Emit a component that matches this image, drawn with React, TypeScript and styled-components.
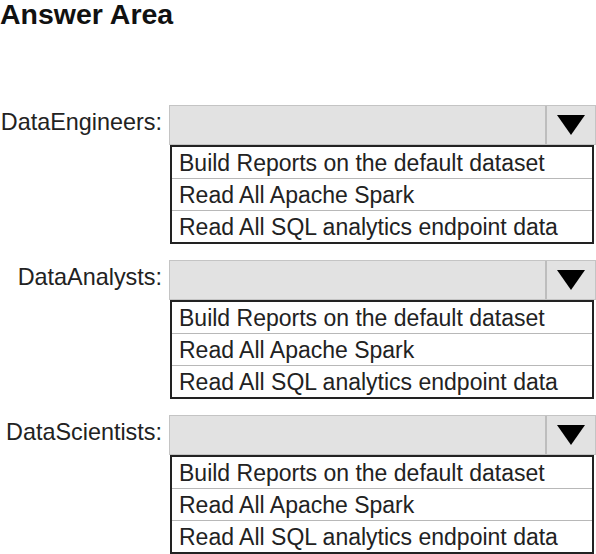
import React from "react";
import styled, { createGlobalStyle } from "styled-components";

const Global = createGlobalStyle`
  html, body { margin: 0; padding: 0; background: #ffffff; }
  body { font-family: "Liberation Sans", Arial, sans-serif; color: #1e1e1e; }
`;

const Page = styled.div`
  width: 596px;
  height: 554px;
  overflow: hidden;
  display: flex;
  flex-direction: column;
`;

const Title = styled.h1`
  margin: 0 0 77px 0;
  font-size: 28.5px;
  font-weight: bold;
  line-height: 28px;
  color: #111;
`;

const Sections = styled.div`
  display: flex;
  flex-direction: column;
  gap: 16px;
`;

const Section = styled.div`
  display: grid;
  grid-template-columns: 162px 1fr;
  column-gap: 7px;
`;

const Label = styled.div`
  grid-column: 1;
  grid-row: 1;
  text-align: right;
  font-size: 23.4px;
  line-height: 34px;
  color: #222;
  white-space: nowrap;
`;

const Select = styled.div`
  grid-column: 2;
  grid-row: 1;
  height: 40px;
  box-sizing: border-box;
  border: 1px solid #c4c4c4;
  background: #e2e2e2;
  display: flex;
  justify-content: flex-end;
`;

const Toggle = styled.div`
  width: 48px;
  border-left: 2px solid #bdbdbd;
  display: flex;
  align-items: center;
  justify-content: center;
`;

const List = styled.div`
  grid-column: 2;
  grid-row: 2;
  margin: 0 2px 0 1px;
  border: 2px solid #222;
  background: #fff;
  display: flex;
  flex-direction: column;
`;

const Option = styled.div<{ $last?: boolean }>`
  height: 31px;
  box-sizing: border-box;
  padding: 2px 0 0 7px;
  line-height: 29px;
  font-size: 23px;
  color: #222;
  white-space: nowrap;
  overflow: hidden;
  border-bottom: ${(p) => (p.$last ? "none" : "1px solid #b8b8b8")};
  height: ${(p) => (p.$last ? "31px" : "32px")};
`;

const options = [
  "Build Reports on the default dataset",
  "Read All Apache Spark",
  "Read All SQL analytics endpoint data",
];

const groups = ["DataEngineers:", "DataAnalysts:", "DataScientists:"];

const Arrow = () => (
  <svg width="28" height="20" viewBox="0 0 28 20">
    <polygon points="0,0 28,0 14,20" fill="#000" />
  </svg>
);

export default function App() {
  return (
    <>
      <Global />
      <Page>
        <Title>Answer Area</Title>
        <Sections>
          {groups.map((g) => (
            <Section key={g}>
              <Label>{g}</Label>
              <Select>
                <Toggle>
                  <Arrow />
                </Toggle>
              </Select>
              <List>
                {options.map((o, i) => (
                  <Option key={o} $last={i === options.length - 1}>
                    {o}
                  </Option>
                ))}
              </List>
            </Section>
          ))}
        </Sections>
      </Page>
    </>
  );
}
